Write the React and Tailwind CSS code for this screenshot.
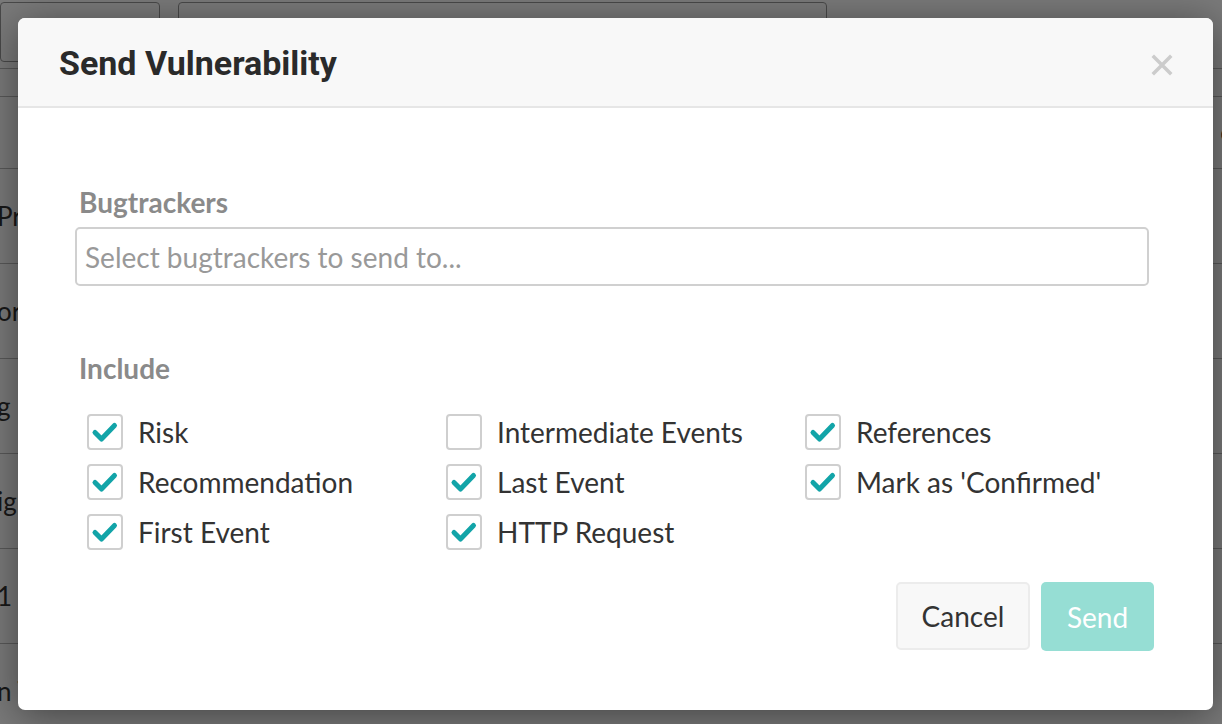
import React, { useState } from "react";

const bgRows = [
  { left: "Pr", right: "s" },
  { left: "or", right: "s" },
  { left: "g", right: "s" },
  { left: "ig", right: "s" },
  { left: "1", right: "s" },
  { left: "n T", right: "s" },
];

const options = [
  [
    { id: "risk", label: "Risk", checked: true },
    { id: "recommendation", label: "Recommendation", checked: true },
    { id: "first", label: "First Event", checked: true },
  ],
  [
    { id: "intermediate", label: "Intermediate Events", checked: false },
    { id: "last", label: "Last Event", checked: true },
    { id: "http", label: "HTTP Request", checked: true },
  ],
  [
    { id: "references", label: "References", checked: true },
    { id: "confirmed", label: "Mark as 'Confirmed'", checked: true },
  ],
];

const Check = ({ checked, onToggle, label }) => (
  <label className="flex items-center h-[50px] cursor-pointer select-none" onClick={onToggle}>
    <span className="w-[36px] h-[36px] rounded-[4px] border-2 border-[#cfcfcf] bg-white flex items-center justify-center shrink-0">
      {checked && (
        <svg width="28" height="24" viewBox="0 0 28 24">
          <path d="M4 12.5 L10.5 19 L23.5 5.5" fill="none" stroke="#12a4a8" strokeWidth="5" strokeLinecap="round" strokeLinejoin="round" />
        </svg>
      )}
    </span>
    <span className="ml-[15px] text-[28px] text-[#333]">{label}</span>
  </label>
);

export default function App() {
  const [state, setState] = useState(() => {
    const s = {};
    options.flat().forEach((o) => (s[o.id] = o.checked));
    return s;
  });

  return (
    <div className="relative w-full h-[724px] overflow-hidden bg-white font-['Lato',sans-serif]">
      {/* Page behind the dialog */}
      <div className="flex gap-[18px] pt-[2px]">
        <div className="w-[160px] h-[60px] border border-[#999] rounded-[4px]" />
        <div className="w-[649px] h-[60px] border border-[#999] rounded-[4px]" />
      </div>
      <div className="mt-[6px] border-t border-[#bbb] h-[28px]" />
      <div className="border-t border-[#bbb] h-[72px] flex justify-end items-center text-[26px] text-[#333]">
        <span className="mr-[-12px]">e</span>
      </div>
      {bgRows.map((r, i) => (
        <div key={i} className="border-t border-[#bbb] h-[95px] flex items-center justify-between text-[26px] text-[#333]">
          <span className="ml-[-3px]">{r.left}</span>
          <span className="mr-[-12px]">{r.right}</span>
        </div>
      ))}

      {/* Overlay */}
      <div className="absolute inset-0 bg-black/[0.52] pt-[18px] pl-[18px]">
        <div className="w-[1195px] h-[692px] bg-white rounded-[7px] shadow-[0_6px_40px_rgba(0,0,0,0.45)] overflow-hidden flex flex-col">
          {/* Header */}
          <div className="h-[90px] bg-[#f8f8f8] border-b-2 border-[#e6e6e6] flex items-center justify-between pl-[41px] pr-[40px] shrink-0">
            <h2 className="font-['Roboto',sans-serif] font-bold text-[34px] text-[#2a2a2a] mt-[2px]">
              Send Vulnerability
            </h2>
            <svg width="22" height="22" viewBox="0 0 22 22" className="mt-[6px]">
              <path d="M3 3 L19 19 M19 3 L3 19" stroke="#cccccc" strokeWidth="3.5" strokeLinecap="square" />
            </svg>
          </div>

          {/* Body */}
          <div className="flex-1 pl-[57px] pr-[64px] pt-[80px]">
            <div className="pl-[4px] font-bold text-[28px] text-[#8a8a8a] leading-none">Bugtrackers</div>
            <div className="mt-[11px] h-[59px] border-2 border-[#d0d0d0] rounded-[5px] flex items-center pl-[8px]">
              <span className="text-[28px] text-[#999]">Select bugtrackers to send to...</span>
            </div>

            <div className="mt-[68px] pl-[4px] font-bold text-[28px] text-[#8a8a8a] leading-none">Include</div>

            <div className="mt-[25px] pl-[12px] grid grid-cols-[359px_359px_1fr]">
              {options.map((col, ci) => (
                <div key={ci} className="flex flex-col">
                  {col.map((o) => (
                    <Check
                      key={o.id}
                      label={o.label}
                      checked={state[o.id]}
                      onToggle={(e) => {
                        e.preventDefault();
                        setState((s) => ({ ...s, [o.id]: !s[o.id] }));
                      }}
                    />
                  ))}
                </div>
              ))}
            </div>

            <div className="mt-[25px] flex justify-end gap-[11px]">
              <button className="w-[134px] h-[68px] bg-[#f8f8f8] border-2 border-[#ececec] rounded-[5px] text-[28px] text-[#333]">
                Cancel
              </button>
              <button className="w-[113px] h-[69px] bg-[#96ded4] rounded-[5px] text-[28px] text-white mr-[-5px]">
                Send
              </button>
            </div>
          </div>
        </div>
      </div>
    </div>
  );
}
